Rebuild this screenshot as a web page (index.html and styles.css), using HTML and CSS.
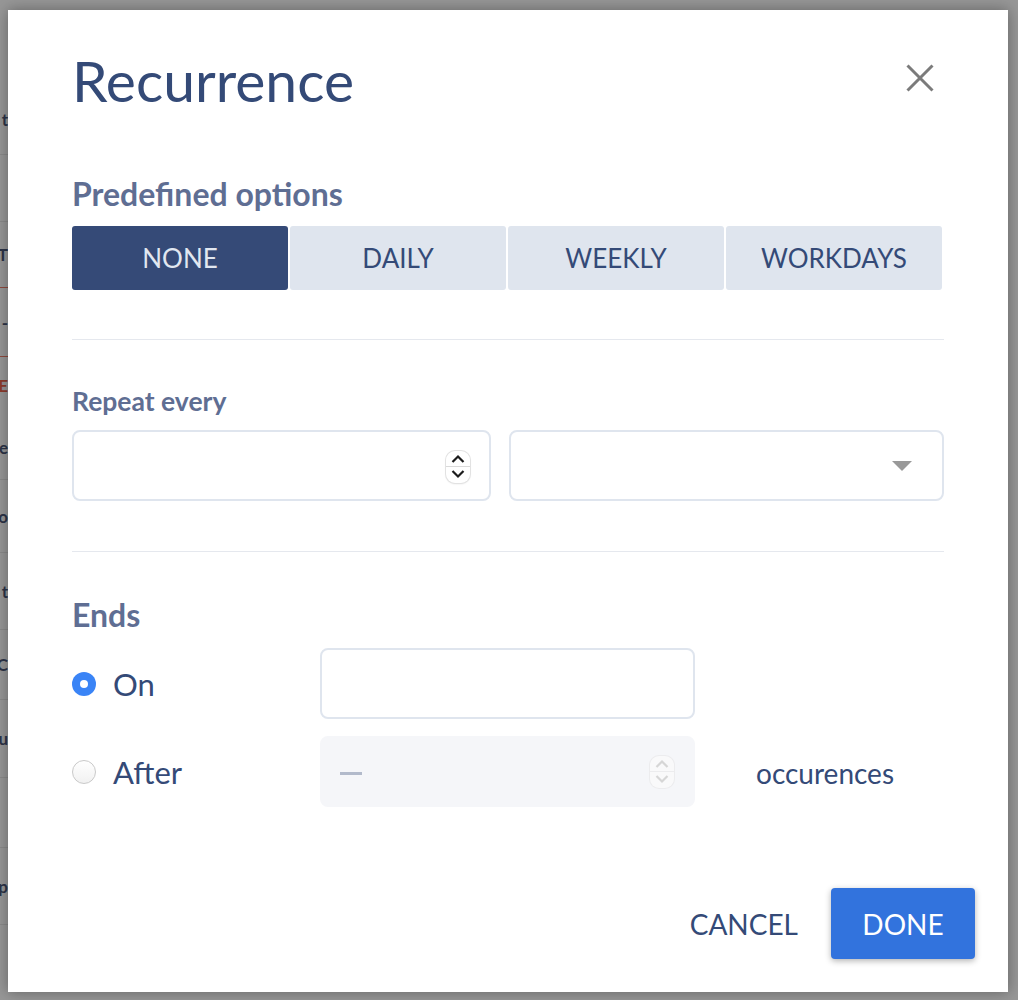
FILE: index.html
```html
<!DOCTYPE html>
<html lang="en">
<head>
<meta charset="utf-8">
<title>Recurrence</title>
<link rel="stylesheet" href="styles.css">
</head>
<body>
<div class="backdrop">
  <div class="bg-row h70"><span>t</span></div>
  <div class="bg-row h67 blank"><span></span></div>
  <div class="bg-row h66 red-line"><span>T</span></div>
  <div class="bg-row h69 red-line"><span>-</span></div>
  <div class="bg-row h58 no-line"><span class="red">E</span></div>
  <div class="bg-row h65"><span>e</span></div>
  <div class="bg-row h73"><span>o</span></div>
  <div class="bg-row h77"><span>t</span></div>
  <div class="bg-row h70"><span>C</span></div>
  <div class="bg-row h78"><span>u</span></div>
  <div class="bg-row h70 blank"><span></span></div>
  <div class="bg-row h77"><span>p</span></div>
</div>

<div class="modal" role="dialog" aria-label="Recurrence">
  <header class="modal-head">
    <h1 class="title">Recurrence</h1>
    <button class="close" aria-label="Close">
      <svg width="28" height="28" viewBox="0 0 28 28"><path d="M1.5 1.5 L26.5 26.5 M26.5 1.5 L1.5 26.5" stroke="#7b7b7b" stroke-width="3" fill="none"/></svg>
    </button>
  </header>

  <h2 class="label label-lg mt-presets">Predefined options</h2>
  <div class="seg">
    <button class="seg-btn active">NONE</button>
    <button class="seg-btn">DAILY</button>
    <button class="seg-btn">WEEKLY</button>
    <button class="seg-btn">WORKDAYS</button>
  </div>

  <div class="divider d1"></div>

  <h2 class="label label-md mt-repeat">Repeat every</h2>
  <div class="repeat-row">
    <div class="field">
      <div class="spin">
        <svg width="24" height="32" viewBox="0 0 24 32"><path d="M6.5 11 L12 5.5 L17.5 11 M6.5 20 L12 25.5 L17.5 20" stroke="#1c1c1c" stroke-width="2.2" fill="none"/></svg>
      </div>
    </div>
    <div class="field select">
      <svg width="20" height="10" viewBox="0 0 20 10"><polygon points="0,0 20,0 10,10" fill="#999"/></svg>
    </div>
  </div>

  <div class="divider d2"></div>

  <h2 class="label label-lg mt-ends">Ends</h2>
  <div class="ends">
    <label class="opt"><span class="radio checked"></span><span>On</span></label>
    <div class="field"></div>
    <div></div>

    <label class="opt"><span class="radio"></span><span>After</span></label>
    <div class="field disabled">
      <div class="dash"></div>
      <div class="spin faded">
        <svg width="24" height="32" viewBox="0 0 24 32"><path d="M6.5 11 L12 5.5 L17.5 11 M6.5 20 L12 25.5 L17.5 20" stroke="#d6d6d6" stroke-width="2.2" fill="none"/></svg>
      </div>
    </div>
    <div class="occ">occurences</div>
  </div>

  <footer class="modal-foot">
    <button class="btn-text">CANCEL</button>
    <button class="btn-primary">DONE</button>
  </footer>
</div>
</body>
</html>
```

FILE: styles.css
```css
* { box-sizing: border-box; }

body {
  margin: 0;
  width: 1018px;
  height: 1000px;
  background: #979797;
  font-family: Lato, "Open Sans", sans-serif;
  overflow: hidden;
  position: relative;
}

/* dimmed page behind the dialog */
.backdrop {
  display: flex;
  flex-direction: column;
  padding-top: 85px;
  width: 8px;
}
.bg-row {
  display: flex;
  align-items: center;
  justify-content: flex-end;
  border-bottom: 1px solid #8a8a8a;
  font: bold 17px Lato, sans-serif;
  color: #2c3347;
  white-space: nowrap;
}
.bg-row.no-line { border-bottom-color: transparent; }
.bg-row.red-line { border-bottom-color: #8e4a3e; }
.bg-row .red { color: #8d3b2c; }
.h58 { height: 58px; }
.h65 { height: 65px; }
.h66 { height: 66px; }
.h67 { height: 67px; }
.h69 { height: 69px; }
.h70 { height: 70px; }
.h73 { height: 73px; }
.h77 { height: 77px; }
.h78 { height: 78px; }

/* dialog */
.modal {
  position: absolute;
  left: 8px;
  top: 10px;
  width: 1000px;
  height: 982px;
  background: #fff;
  box-shadow: 0 0 14px rgba(0, 0, 0, 0.35);
  padding: 36px 64px 33px 64px;
  display: flex;
  flex-direction: column;
}

.modal-head {
  display: flex;
  justify-content: space-between;
  align-items: center;
  height: 68px;
}
.title {
  margin: 0;
  font-size: 57px;
  font-weight: 400;
  line-height: 68px;
  color: #344a77;
}
.close {
  width: 40px;
  height: 40px;
  margin: 0 4px 4px 0;
  padding: 0;
  border: none;
  background: none;
  display: flex;
  align-items: center;
  justify-content: center;
}

.label {
  margin: 0;
  font-weight: 700;
  color: #5f6e93;
}
.label-lg { font-size: 32px; line-height: 36px; }
.label-md { font-size: 26.5px; line-height: 30px; }
.mt-presets { margin-top: 62px; margin-bottom: 14px; }
.mt-repeat { margin-top: 46px; margin-bottom: 14px; }
.mt-ends { margin-top: 45px; margin-bottom: 15px; }

.seg {
  display: grid;
  grid-template-columns: repeat(4, 1fr);
  gap: 2px;
  height: 64px;
  width: 870px;
}
.seg-btn {
  border: none;
  border-radius: 3px;
  background: #dfe5ee;
  color: #344a77;
  font-family: Lato, sans-serif;
  font-size: 26px;
  padding: 0;
}
.seg-btn.active {
  background: #354a77;
  color: #e1e7f0;
}

.divider {
  height: 1px;
  background: #e5e8ee;
}
.d1 { margin-top: 49px; }
.d2 { margin-top: 50px; }

.repeat-row {
  display: grid;
  grid-template-columns: 419px 1fr;
  gap: 18px;
  height: 71px;
}

.field {
  height: 71px;
  border: 2px solid #dfe5ee;
  border-radius: 8px;
  display: flex;
  align-items: center;
  justify-content: flex-end;
  padding-right: 19px;
}
.field.select { padding-right: 30px; }
.field.disabled {
  border-color: #f5f6f9;
  background: #f5f6f9;
  justify-content: space-between;
  padding-left: 18px;
}

.spin {
  width: 24px;
  height: 32px;
  border-radius: 9px;
  background: #fff;
  box-shadow: 0 0 0 1px #e2e2e2, 0 1px 2px rgba(0, 0, 0, 0.12);
  position: relative;
  margin-top: 3px;
}
.spin::after {
  content: "";
  position: absolute;
  left: 0;
  right: 0;
  top: 15px;
  height: 1px;
  background: #dadada;
}
.spin svg { display: block; }
.spin.faded {
  background: #f9f9fa;
  box-shadow: 0 0 0 1px #ececee;
  margin-top: 0;
}
.spin.faded::after { background: #ececee; }

.dash {
  width: 22px;
  height: 3px;
  background: #b2bacb;
  margin-top: 3px;
}

.ends {
  display: grid;
  grid-template-columns: 248px 375px auto;
  grid-auto-rows: 71px;
  row-gap: 17px;
}
.opt {
  display: flex;
  align-items: center;
  gap: 17px;
  font-size: 31px;
  color: #344a77;
}
.radio {
  width: 24px;
  height: 24px;
  border-radius: 50%;
  border: 1px solid #c9c9c9;
  background: linear-gradient(#ffffff, #f1f1f1);
  position: relative;
  flex: none;
}
.radio.checked {
  border: none;
  background: #3a84f6;
}
.radio.checked::after {
  content: "";
  position: absolute;
  left: 8px;
  top: 8px;
  width: 8px;
  height: 8px;
  border-radius: 50%;
  background: #fff;
}
.occ {
  align-self: center;
  margin-left: 61px;
  margin-top: 2px;
  font-size: 28px;
  color: #344a77;
}

.modal-foot {
  margin-top: auto;
  margin-right: -31px;
  display: flex;
  justify-content: flex-end;
  align-items: center;
}
.btn-text {
  border: none;
  background: none;
  padding: 0;
  margin-right: 33px;
  font-family: Lato, sans-serif;
  font-size: 28px;
  color: #344a77;
}
.btn-primary {
  width: 144px;
  height: 71px;
  border: none;
  border-radius: 4px;
  background: #3273dd;
  color: #fff;
  font-family: Lato, sans-serif;
  font-size: 28px;
  box-shadow: 0 2px 6px rgba(0, 0, 0, 0.3);
}
```
